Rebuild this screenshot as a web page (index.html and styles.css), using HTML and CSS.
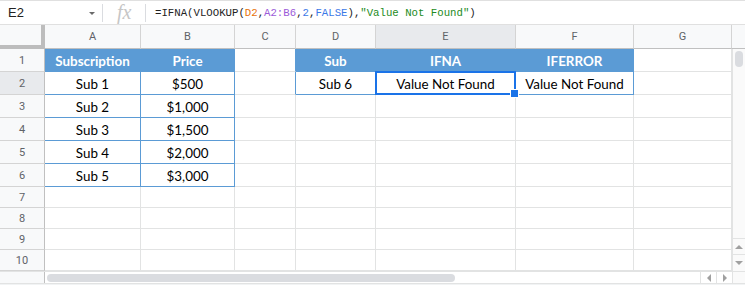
FILE: index.html
```html
<!DOCTYPE html>
<html>
<head>
<meta charset="utf-8">
<link rel="stylesheet" href="styles.css">
</head>
<body>
<div class="app">
  <div class="fbar">
    <div class="namebox"><span class="ref">E2</span><span class="caret"></span></div>
    <div class="sep"></div>
    <div class="fx">fx</div>
    <div class="sep"></div>
    <div class="formula">=IFNA(VLOOKUP(<span class="c-o">D2</span>,<span class="c-p">A2:B6</span>,<span class="c-b">2</span>,<span class="c-b">FALSE</span>),<span class="c-g">"Value Not Found"</span>)</div>
  </div>
  <div class="grid">
    <div class="corner"></div>
    <div class="ch">A</div><div class="ch">B</div><div class="ch">C</div><div class="ch">D</div><div class="ch sel">E</div><div class="ch">F</div><div class="ch">G</div><div class="ch last"></div>
    <div class="vscroll">
      <div class="vthumb"></div>
      <div class="vspace"></div>
      <div class="varrow"><span class="tri up"></span></div>
      <div class="varrow"><span class="tri down"></span></div>
    </div>

    <div class="rh">1</div>
    <div class="c th">Subscription</div><div class="c th">Price</div><div class="c bl"></div><div class="c th">Sub</div><div class="c th">IFNA</div><div class="c th">IFERROR</div><div class="c"></div>

    <div class="rh sel">2</div>
    <div class="c tb">Sub 1</div><div class="c tb">$500</div><div class="c bl"></div><div class="c tb">Sub 6</div><div class="c tb active">Value Not Found</div><div class="c tb">Value Not Found</div><div class="c"></div>

    <div class="rh">3</div>
    <div class="c tb">Sub 2</div><div class="c tb">$1,000</div><div class="c"></div><div class="c"></div><div class="c"></div><div class="c"></div><div class="c"></div>

    <div class="rh">4</div>
    <div class="c tb">Sub 3</div><div class="c tb">$1,500</div><div class="c"></div><div class="c"></div><div class="c"></div><div class="c"></div><div class="c"></div>

    <div class="rh">5</div>
    <div class="c tb">Sub 4</div><div class="c tb">$2,000</div><div class="c"></div><div class="c"></div><div class="c"></div><div class="c"></div><div class="c"></div>

    <div class="rh">6</div>
    <div class="c tb">Sub 5</div><div class="c tb">$3,000</div><div class="c"></div><div class="c"></div><div class="c"></div><div class="c"></div><div class="c"></div>

    <div class="rh">7</div>
    <div class="c"></div><div class="c"></div><div class="c"></div><div class="c"></div><div class="c"></div><div class="c"></div><div class="c"></div>

    <div class="rh">8</div>
    <div class="c"></div><div class="c"></div><div class="c"></div><div class="c"></div><div class="c"></div><div class="c"></div><div class="c"></div>

    <div class="rh">9</div>
    <div class="c"></div><div class="c"></div><div class="c"></div><div class="c"></div><div class="c"></div><div class="c"></div><div class="c"></div>

    <div class="rh">10</div>
    <div class="c"></div><div class="c"></div><div class="c"></div><div class="c"></div><div class="c"></div><div class="c"></div><div class="c"></div>
  </div>
  <div class="hscroll">
    <div class="hlead"></div>
    <div class="htrack"><div class="hthumb"></div></div>
    <div class="harrow"><span class="tri left"></span></div>
    <div class="harrow"><span class="tri right"></span></div>
    <div class="hend"></div>
  </div>
  <div class="foot"></div>
</div>
</body>
</html>
```

FILE: styles.css
```css
* { box-sizing: border-box; }
html, body { margin: 0; padding: 0; background: #fff; }
.app { width: 745px; height: 285px; overflow: hidden; font-family: Roboto, "Liberation Sans", sans-serif; }

.fbar {
  height: 25px;
  border-top: 1px solid #e0e0e0;
  border-bottom: 1px solid #e0e0e0;
  display: flex;
  align-items: center;
}
.namebox { width: 102px; display: flex; align-items: center; padding-left: 8px; }
.ref { font-family: Arial, "Liberation Sans", sans-serif; font-size: 13px; color: #222; flex: 1; }
.caret { width: 0; height: 0; border-left: 3.5px solid transparent; border-right: 3.5px solid transparent; border-top: 3.5px solid #6a6a6a; margin-right: 7px; margin-top: 1px; }
.sep { width: 1px; height: 18px; background: #dadce0; }
.fx { width: 42px; font-family: "Liberation Serif", serif; font-style: italic; font-size: 20px; color: #c6c6c6; padding-left: 14px; line-height: 20px; margin-top: -2px; }
.formula { padding-left: 9px; font-family: "Liberation Mono", monospace; font-size: 10.7px; color: #222; white-space: nowrap; }
.c-o { color: #e8710a; }
.c-p { color: #9b5bd8; }
.c-b { color: #3b78e7; }
.c-g { color: #228b22; }

.grid {
  display: grid;
  grid-template-columns: 45px 96px 94px 61px 80px 140px 118px 98px 13px;
  grid-template-rows: 24px repeat(6, 23px) repeat(4, 21px);
}
.corner {
  background: #f8f9fa;
  border-right: 4px solid #bdbdbd;
  border-bottom: 4px solid #bdbdbd;
}
.ch {
  background: #f8f9fa;
  border-right: 1px solid #d4d4d4;
  border-bottom: 1px solid #c0c0c0;
  display: flex; align-items: center; justify-content: center;
  font-size: 11px; color: #5f6368;
}
.ch.sel { background: #e8eaed; }
.ch.last { border-right: none; }
.vscroll {
  grid-column: 9; grid-row: 2 / span 10;
  background: #fafafa;
  border-left: 1px solid #e2e3e3;
  display: flex; flex-direction: column;
}
.vthumb { width: 8px; height: 16px; margin: 2px 0 0 2px; background: #dadce0; border-radius: 4px; }
.vspace { flex: 1; }
.varrow { height: 16px; border-top: 1px solid #e2e3e3; display: flex; align-items: center; justify-content: center; }
.varrow:last-child { height: 17px; }

.rh {
  background: #f8f9fa;
  border-right: 1px solid #c0c0c0;
  border-bottom: 1px solid #d4d4d4;
  display: flex; align-items: center; justify-content: center;
  font-size: 11px; color: #5f6368;
}
.rh.sel { background: #e8eaed; }
.c {
  border-right: 1px solid #e2e3e3;
  border-bottom: 1px solid #e2e3e3;
  display: flex; align-items: center; justify-content: center;
  font-family: Lato, "Open Sans", sans-serif; font-size: 13.4px; color: #000;
  padding-top: 1px;
  white-space: nowrap;
}
.c.th { background: #5b9bd5; color: #fff; font-weight: bold; border-right-color: #5b9bd5; border-bottom-color: #5b9bd5; }
.c.tb { border-right-color: #5b9bd5; border-bottom-color: #5b9bd5; }
.c.bl { border-right-color: #5b9bd5; }
.c.active { position: relative; }
.c.active::after {
  content: ""; position: absolute; left: -1px; top: -1px; right: -1px; bottom: -1px;
  border: 2px solid #1a73e8;
}
.c.active::before {
  content: ""; position: absolute; right: -4px; bottom: -4px; width: 7px; height: 7px;
  background: #1a73e8; border: 1px solid #fff; z-index: 1;
}

.hscroll { height: 12px; display: flex; border-top: 1px solid #e2e3e3; }
.hlead { width: 45px; background: #f8f9fa; border-right: 1px solid #c0c0c0; }
.htrack { width: 655px; padding: 2px 0 0 2px; }
.hthumb { width: 408px; height: 8px; background: #dadce0; border-radius: 4px; }
.harrow { width: 16px; border-left: 1px solid #e2e3e3; display: flex; align-items: center; justify-content: center; }
.hend { width: 13px; border-left: 1px solid #e2e3e3; background: #fafafa; }
.foot { height: 2px; background: #f1f3f4; border-top: 1px solid #e2e3e3; }

.tri { width: 0; height: 0; }
.tri.up { border-left: 4px solid transparent; border-right: 4px solid transparent; border-bottom: 4px solid #a0a0a0; }
.tri.down { border-left: 4px solid transparent; border-right: 4px solid transparent; border-top: 4px solid #a0a0a0; }
.tri.left { border-top: 4px solid transparent; border-bottom: 4px solid transparent; border-right: 4px solid #a0a0a0; }
.tri.right { border-top: 4px solid transparent; border-bottom: 4px solid transparent; border-left: 4px solid #a0a0a0; }
```
